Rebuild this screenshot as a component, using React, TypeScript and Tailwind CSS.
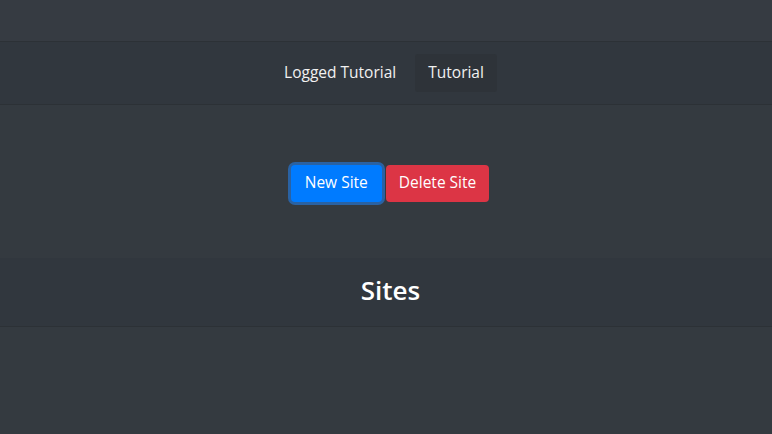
export default function App() {
  return (
    <div
      className="min-h-[434px] bg-[#343a40] text-white"
      style={{ fontFamily: '"Open Sans", "Noto Sans", sans-serif' }}
    >
      <div className="h-[42px] border-b border-[#2c3136] bg-[#363b42]" />

      <nav className="flex h-[63px] items-center justify-center gap-[19px] border-b border-[#2c3136] bg-[#31373e] pl-[9px] text-[15.5px]">
        <span className="-mt-[1px] text-[#f1f1f1]">Logged Tutorial</span>
        <span className="rounded-[3px] bg-[#2e3339] px-[13px] py-[7px] text-[#f1f1f1]">
          Tutorial
        </span>
      </nav>

      <div className="flex h-[153px] items-center justify-center gap-[4px] pl-[8px] pt-[3px]">
        <button className="h-[37px] rounded-[4px] bg-[#007bff] px-[14px] text-[15.5px] text-white ring-[3px] ring-[#2a62a3]">
          New Site
        </button>
        <button className="h-[37px] rounded-[4px] bg-[#dc3545] px-[13px] text-[15.5px] text-white">
          Delete Site
        </button>
      </div>

      <div className="flex h-[69px] items-center justify-center border-b border-[#2c3136] bg-[#31373e] pb-[4px] pl-[9px]">
        <h1 className="text-[26px] font-semibold">Sites</h1>
      </div>
    </div>
  );
}
